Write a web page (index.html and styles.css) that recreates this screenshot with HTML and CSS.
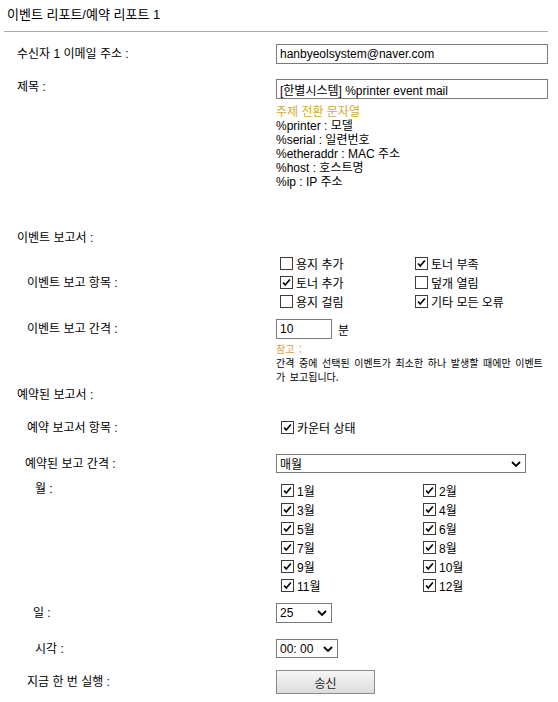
FILE: index.html
```html
<!DOCTYPE html>
<html lang="ko">
<head>
<meta charset="utf-8">
<title>이벤트 리포트/예약 리포트 1</title>
<link rel="stylesheet" href="styles.css">
</head>
<body>
<div class="page">
  <div class="title">이벤트 리포트/예약 리포트 1</div>

  <div class="row r-email">
    <div class="lbl i1">수신자 1 이메일 주소 :</div>
    <div class="ctl"><input class="text wide" type="text" value="hanbyeolsystem@naver.com"></div>
  </div>

  <div class="row r-subject">
    <div class="lbl i1 lbl-top">제목 :</div>
    <div class="ctl">
      <input class="text wide" type="text" value="[한별시스템] %printer event mail">
      <div class="hints">
        <div class="hint-head">주제 전환 문자열</div>
        <div>%printer : 모델</div>
        <div>%serial : 일련번호</div>
        <div>%etheraddr : MAC 주소</div>
        <div>%host : 호스트명</div>
        <div>%ip : IP 주소</div>
      </div>
    </div>
  </div>

  <div class="row r-eventhead">
    <div class="lbl i1 lbl-head">이벤트 보고서 :</div>
    <div class="ctl"></div>
  </div>

  <div class="row r-items">
    <div class="lbl i2">이벤트 보고 항목 :</div>
    <div class="ctl cb-grid ev-grid">
      <label class="cb"><span class="box"></span>용지 추가</label>
      <label class="cb"><span class="box"><svg viewBox="0 0 13 13" width="13" height="13"><path d="M2.5 6.5 L5 9.5 L10.5 3" fill="none" stroke="#000" stroke-width="2"/></svg></span>토너 부족</label>
      <label class="cb"><span class="box"><svg viewBox="0 0 13 13" width="13" height="13"><path d="M2.5 6.5 L5 9.5 L10.5 3" fill="none" stroke="#000" stroke-width="2"/></svg></span>토너 추가</label>
      <label class="cb"><span class="box"></span>덮개 열림</label>
      <label class="cb"><span class="box"></span>용지 걸림</label>
      <label class="cb"><span class="box"><svg viewBox="0 0 13 13" width="13" height="13"><path d="M2.5 6.5 L5 9.5 L10.5 3" fill="none" stroke="#000" stroke-width="2"/></svg></span>기타 모든 오류</label>
    </div>
  </div>

  <div class="row r-interval">
    <div class="lbl i2">이벤트 보고 간격 :</div>
    <div class="ctl inline"><input class="text short" type="text" value="10"><span class="unit">분</span></div>
  </div>

  <div class="note">
    <div class="note-head">참고 :</div>
    <div>간격 중에 선택된 이벤트가 최소한 하나 발생할 때에만 이벤트가 보고됩니다.</div>
  </div>

  <div class="row r-schedhead">
    <div class="lbl i1 lbl-head">예약된 보고서 :</div>
    <div class="ctl"></div>
  </div>

  <div class="row r-scheditems">
    <div class="lbl i2">예약 보고서 항목 :</div>
    <div class="ctl cb-row">
      <label class="cb"><span class="box"><svg viewBox="0 0 13 13" width="13" height="13"><path d="M2.5 6.5 L5 9.5 L10.5 3" fill="none" stroke="#000" stroke-width="2"/></svg></span>카운터 상태</label>
    </div>
  </div>

  <div class="row r-schedint">
    <div class="lbl i2b">예약된 보고 간격 :</div>
    <div class="ctl">
      <div class="select sel-wide"><span>매월</span><svg class="chev" viewBox="0 0 10 6" width="10" height="6"><path d="M1 1 L5 5 L9 1" fill="none" stroke="#000" stroke-width="1.8"/></svg></div>
    </div>
  </div>

  <div class="row r-months">
    <div class="lbl i3 lbl-head">월 :</div>
    <div class="ctl cb-grid mo-grid">
      <label class="cb"><span class="box"><svg viewBox="0 0 13 13" width="13" height="13"><path d="M2.5 6.5 L5 9.5 L10.5 3" fill="none" stroke="#000" stroke-width="2"/></svg></span>1월</label>
      <label class="cb"><span class="box"><svg viewBox="0 0 13 13" width="13" height="13"><path d="M2.5 6.5 L5 9.5 L10.5 3" fill="none" stroke="#000" stroke-width="2"/></svg></span>2월</label>
      <label class="cb"><span class="box"><svg viewBox="0 0 13 13" width="13" height="13"><path d="M2.5 6.5 L5 9.5 L10.5 3" fill="none" stroke="#000" stroke-width="2"/></svg></span>3월</label>
      <label class="cb"><span class="box"><svg viewBox="0 0 13 13" width="13" height="13"><path d="M2.5 6.5 L5 9.5 L10.5 3" fill="none" stroke="#000" stroke-width="2"/></svg></span>4월</label>
      <label class="cb"><span class="box"><svg viewBox="0 0 13 13" width="13" height="13"><path d="M2.5 6.5 L5 9.5 L10.5 3" fill="none" stroke="#000" stroke-width="2"/></svg></span>5월</label>
      <label class="cb"><span class="box"><svg viewBox="0 0 13 13" width="13" height="13"><path d="M2.5 6.5 L5 9.5 L10.5 3" fill="none" stroke="#000" stroke-width="2"/></svg></span>6월</label>
      <label class="cb"><span class="box"><svg viewBox="0 0 13 13" width="13" height="13"><path d="M2.5 6.5 L5 9.5 L10.5 3" fill="none" stroke="#000" stroke-width="2"/></svg></span>7월</label>
      <label class="cb"><span class="box"><svg viewBox="0 0 13 13" width="13" height="13"><path d="M2.5 6.5 L5 9.5 L10.5 3" fill="none" stroke="#000" stroke-width="2"/></svg></span>8월</label>
      <label class="cb"><span class="box"><svg viewBox="0 0 13 13" width="13" height="13"><path d="M2.5 6.5 L5 9.5 L10.5 3" fill="none" stroke="#000" stroke-width="2"/></svg></span>9월</label>
      <label class="cb"><span class="box"><svg viewBox="0 0 13 13" width="13" height="13"><path d="M2.5 6.5 L5 9.5 L10.5 3" fill="none" stroke="#000" stroke-width="2"/></svg></span>10월</label>
      <label class="cb"><span class="box"><svg viewBox="0 0 13 13" width="13" height="13"><path d="M2.5 6.5 L5 9.5 L10.5 3" fill="none" stroke="#000" stroke-width="2"/></svg></span>11월</label>
      <label class="cb"><span class="box"><svg viewBox="0 0 13 13" width="13" height="13"><path d="M2.5 6.5 L5 9.5 L10.5 3" fill="none" stroke="#000" stroke-width="2"/></svg></span>12월</label>
    </div>
  </div>

  <div class="row r-day">
    <div class="lbl i3b">일 :</div>
    <div class="ctl">
      <div class="select sel-day"><span>25</span><svg class="chev" viewBox="0 0 10 6" width="10" height="6"><path d="M1 1 L5 5 L9 1" fill="none" stroke="#000" stroke-width="1.8"/></svg></div>
    </div>
  </div>

  <div class="row r-time">
    <div class="lbl i3">시각 :</div>
    <div class="ctl">
      <div class="select sel-time"><span>00: 00</span><svg class="chev" viewBox="0 0 10 6" width="10" height="6"><path d="M1 1 L5 5 L9 1" fill="none" stroke="#000" stroke-width="1.8"/></svg></div>
    </div>
  </div>

  <div class="row r-run">
    <div class="lbl i2">지금 한 번 실행 :</div>
    <div class="ctl"><button class="btn" type="button">송신</button></div>
  </div>
</div>
</body>
</html>
```
FILE: styles.css
```css
html, body {
  margin: 0;
  padding: 0;
  background: #fff;
}

body {
  font-family: "Liberation Sans", "Noto Sans CJK KR", sans-serif;
  font-size: 12px;
  color: #000;
}

.page {
  width: 544px;
  padding: 0 10px 0 4px;
}

.title {
  box-sizing: border-box;
  height: 32px;
  line-height: 30px;
  border-bottom: 1px solid #a9a9a9;
  padding-left: 3px;
  font-size: 13px;
}

.row {
  display: grid;
  grid-template-columns: 272px 272px;
  align-items: center;
}

.lbl {
  line-height: 16px;
  white-space: nowrap;
}

.lbl-top { line-height: 17px; }
.lbl-head { align-self: start; }

.i1 { padding-left: 13px; }
.i2 { padding-left: 23px; }
.i2b { padding-left: 21px; }
.i3 { padding-left: 31px; }
.i3b { padding-left: 29px; }

.text {
  display: block;
  box-sizing: border-box;
  height: 20px;
  border: 1px solid #7a7a7a;
  padding: 0 3px;
  margin: 0;
  font: inherit;
  font-size: 12px;
  color: #000;
  background: #fff;
  outline: none;
}

.wide { width: 272px; }
.short { width: 56px; }

.inline {
  display: flex;
  align-items: center;
}

.unit {
  margin-left: 6px;
}

.hints {
  margin-top: 6px;
  line-height: 14px;
}

.hint-head {
  color: #d2a834;
}

.cb-grid {
  display: grid;
  grid-auto-rows: 19px;
  align-items: center;
}

.ev-grid {
  grid-template-columns: 135px 135px;
  padding-left: 4px;
}

.mo-grid {
  grid-template-columns: 142px 130px;
  padding-left: 5px;
}

.cb-row {
  display: flex;
  align-items: center;
  height: 19px;
  padding-left: 5px;
}

.cb {
  display: flex;
  align-items: center;
  white-space: nowrap;
}

.box {
  width: 13px;
  height: 13px;
  box-sizing: border-box;
  border: 1px solid #3c3c3c;
  background: #fff;
  margin-right: 3px;
  display: flex;
  align-items: center;
  justify-content: center;
  flex: none;
}

.box svg {
  display: block;
  width: 11px;
  height: 11px;
}

.note {
  margin-left: 272px;
  margin-top: 3px;
  font-family: "Noto Sans CJK KR", "Liberation Sans", sans-serif;
  font-size: 10px;
  line-height: 14px;
  width: 272px;
  word-break: break-all;
  word-spacing: 1.8px;
}

.note-head {
  color: #dfa23c;
}

.select {
  display: flex;
  align-items: center;
  justify-content: space-between;
  box-sizing: border-box;
  border: 1px solid #7a7a7a;
  background: #fff;
  padding: 0 4px 0 3px;
}

.chev { display: block; flex: none; }

.sel-wide { width: 250px; height: 19px; }
.sel-day { width: 56px; height: 20px; }
.sel-time { width: 62px; height: 19px; }

.btn {
  display: block;
  width: 99px;
  height: 24px;
  margin: 0;
  padding: 0;
  border: 1px solid #8c8c8c;
  background: linear-gradient(#f6f6f6, #dcdcdc);
  font-family: "Liberation Sans", "Noto Sans CJK KR", sans-serif;
  font-size: 12px;
  color: #222;
}

.r-email { margin-top: 12px; }
.r-subject { margin-top: 15px; align-items: start; }
.r-eventhead { margin-top: 41px; }
.r-items { margin-top: 8px; }
.r-interval { margin-top: 8px; }
.r-schedhead { margin-top: 3px; }
.r-scheditems { margin-top: 15px; }
.r-schedint { margin-top: 17px; }
.r-months { margin-top: 8px; align-items: start; }
.r-day { margin-top: 8px; }
.r-time { margin-top: 16px; }
.r-run { margin-top: 12px; }
```
